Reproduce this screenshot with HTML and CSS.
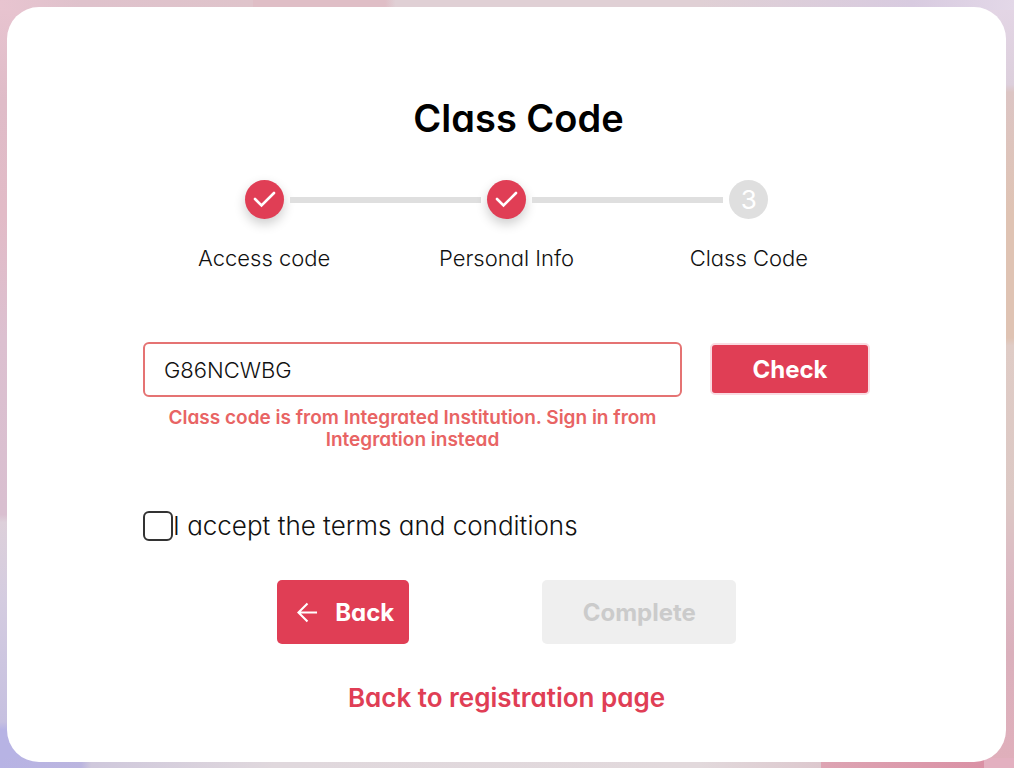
FILE: index.html
```html
<!DOCTYPE html>
<html lang="en">
<head>
<meta charset="utf-8">
<meta name="viewport" content="width=device-width, initial-scale=1">
<title>Class Code</title>
<link rel="stylesheet" href="styles.css">
</head>
<body>
<main class="card">
  <h1 class="title">Class Code</h1>
  <ol class="stepper">
    <li class="step">
      <span class="marker done"><svg viewBox="0 0 39 39" aria-hidden="true"><path d="M10 19L16.500 25.500L29 13"/></svg></span>
      <span class="step-label">Access code</span>
    </li>
    <li class="step">
      <span class="marker done"><svg viewBox="0 0 39 39" aria-hidden="true"><path d="M10 19L16.500 25.500L29 13"/></svg></span>
      <span class="step-label">Personal Info</span>
    </li>
    <li class="step">
      <span class="marker">3</span>
      <span class="step-label">Class Code</span>
    </li>
  </ol>
  <form class="form">
    <div class="code-row">
      <div class="field">
        <input class="code-input" type="text" value="G86NCWBG" aria-label="Class code" aria-invalid="true" aria-describedby="code-error">
        <p class="error" id="code-error">Class code is from Integrated Institution. Sign in from Integration instead</p>
      </div>
      <button class="button check" type="button">Check</button>
    </div>
    <div class="terms">
      <input class="checkbox" type="checkbox" id="terms">
      <label for="terms">I accept the terms and conditions</label>
    </div>
    <div class="actions">
      <button class="button back" type="button"><svg class="arrow" viewBox="0 0 22 22" aria-hidden="true"><path d="M21 11H2M11 1.500L1.500 11L11 20.500"/></svg>Back</button>
      <button class="button complete" type="submit" disabled>Complete</button>
    </div>
  </form>
  <a class="return-link" href="#">Back to registration page</a>
</main>
</body>
</html>
```
FILE: styles.css
```css
* {
  box-sizing: border-box;
}

body {
  margin: 0;
  min-height: 100vh;
  padding: 7px 8px 6px 7px;
  display: flex;
  font-family: Inter, "Open Sans", sans-serif;
  font-feature-settings: "cv11";
  font-weight: 300;
  color: #111;
  background:
    linear-gradient(90deg, #e8c4d0 0, #dfc2cc 8%, #dfc4cb 25%, #dfbec6 25%, #dfbec6 38%, #e0d0d5 39%, #e0d0d5 69%, #d8cbe0 90%, #e3d8e8) top / 100% 10px no-repeat,
    linear-gradient(90deg, #b7b3e4 0, #bbb5df 8%, #cfc8dc 9%, #e0d8dd 27%, #e2d9dc 69%, #ddc8ce 81%, #dda4b3 81%, #da91a5 97%, #e3b0c0 97%) bottom / 100% 10px no-repeat,
    linear-gradient(#e8c4d0, #dfbcc8 13%, #e2bbc7 28%, #dcc0d0 44%, #d9bfd0 67%, #ddd0da 68%, #d4cce0 78%, #c6c0e0 94%, #b7b3e4 95%) left / 50% 100% no-repeat,
    linear-gradient(#e4d6e6, #dccfdc 11%, #dcc5c4 12%, #dfc3b3 28%, #dfc3b3 44%, #dfccc6 45%, #dcc8c4 65%, #dcbcc4 73%, #dab0bc 85%, #e0afbb) right / 50% 100% no-repeat;
}

.card {
  flex: 1;
  display: flex;
  flex-direction: column;
  padding: 87px 136px 40px;
  border-radius: 32px;
  background: #fff;
}

.title {
  margin: 0;
  padding-left: 24px;
  font-size: 38px;
  line-height: 48px;
  font-weight: 600;
  color: #000;
  text-align: center;
}

.stepper {
  display: grid;
  grid-template-columns: repeat(3, 1fr);
  margin: 38px 0 0;
  padding: 0;
  list-style: none;
}

.step {
  display: grid;
  grid-template-columns: 1fr 39px 1fr;
  column-gap: 6px;
  row-gap: 23px;
  align-items: center;
}

.step::before,
.step::after {
  content: "";
  grid-row: 1;
  height: 6px;
  background: #dfdfdf;
}

.step::before {
  grid-column: 1;
}

.step::after {
  grid-column: 3;
}

.step:first-child::before,
.step:last-child::after {
  background: none;
}

.marker {
  grid-column: 2;
  grid-row: 1;
  width: 39px;
  height: 39px;
  border-radius: 50%;
  background: #dfdfdf;
  color: #fff;
  font-size: 26px;
  line-height: 40px;
  font-weight: 400;
  text-align: center;
}

.done {
  background: #e03e55;
  box-shadow: 0 5px 12px rgba(0, 0, 0, 0.2);
}

.marker svg {
  display: block;
  fill: none;
  stroke: #fff;
  stroke-width: 2.6;
  stroke-linecap: round;
}

.step-label {
  grid-column: 1 / -1;
  font-size: 22px;
  line-height: 32px;
  text-align: center;
}

.form {
  margin-top: 68px;
}

.code-row {
  display: flex;
  align-items: flex-start;
  gap: 28px;
}

.field {
  flex: 1;
}

.code-input {
  display: block;
  width: 100%;
  height: 55px;
  padding: 0 19px;
  border: 2px solid #e57373;
  border-radius: 6px;
  background: #fff;
  color: #111;
  font: inherit;
  font-size: 22px;
}

.error {
  margin: 10px 0 0;
  padding: 0 16px;
  font-size: 19px;
  line-height: 22px;
  font-weight: 600;
  color: #e86464;
  text-align: center;
}

.button {
  border: 0;
  border-radius: 5px;
  background: #e03e55;
  color: #fff;
  font: inherit;
  font-size: 24px;
  font-weight: 700;
}

.check {
  width: 160px;
  height: 52px;
  margin-top: 1px;
  border: 2px solid #fadbe2;
}

.terms {
  display: flex;
  align-items: center;
  margin-top: 60px;
  font-size: 26px;
  line-height: 30px;
}

.checkbox {
  appearance: none;
  width: 30px;
  height: 30px;
  margin: 0;
  border: 2px solid #333;
  border-radius: 6px;
  background: #fff;
}

.actions {
  display: flex;
  justify-content: space-evenly;
  margin-top: 39px;
}

.back,
.complete {
  height: 64px;
}

.back {
  display: flex;
  align-items: center;
  justify-content: center;
  gap: 17px;
  width: 132px;
  padding: 0 16px 0 22px;
}

.arrow {
  flex: none;
  width: 21px;
  height: 21px;
  fill: none;
  stroke: #fff;
  stroke-width: 2.2;
}

.complete {
  width: 194px;
  background: #efefef;
  color: #cbcbcb;
}

.return-link {
  align-self: center;
  margin-top: 38px;
  font-size: 26px;
  line-height: 32px;
  font-weight: 600;
  color: #e03e55;
  text-decoration: none;
}
```
